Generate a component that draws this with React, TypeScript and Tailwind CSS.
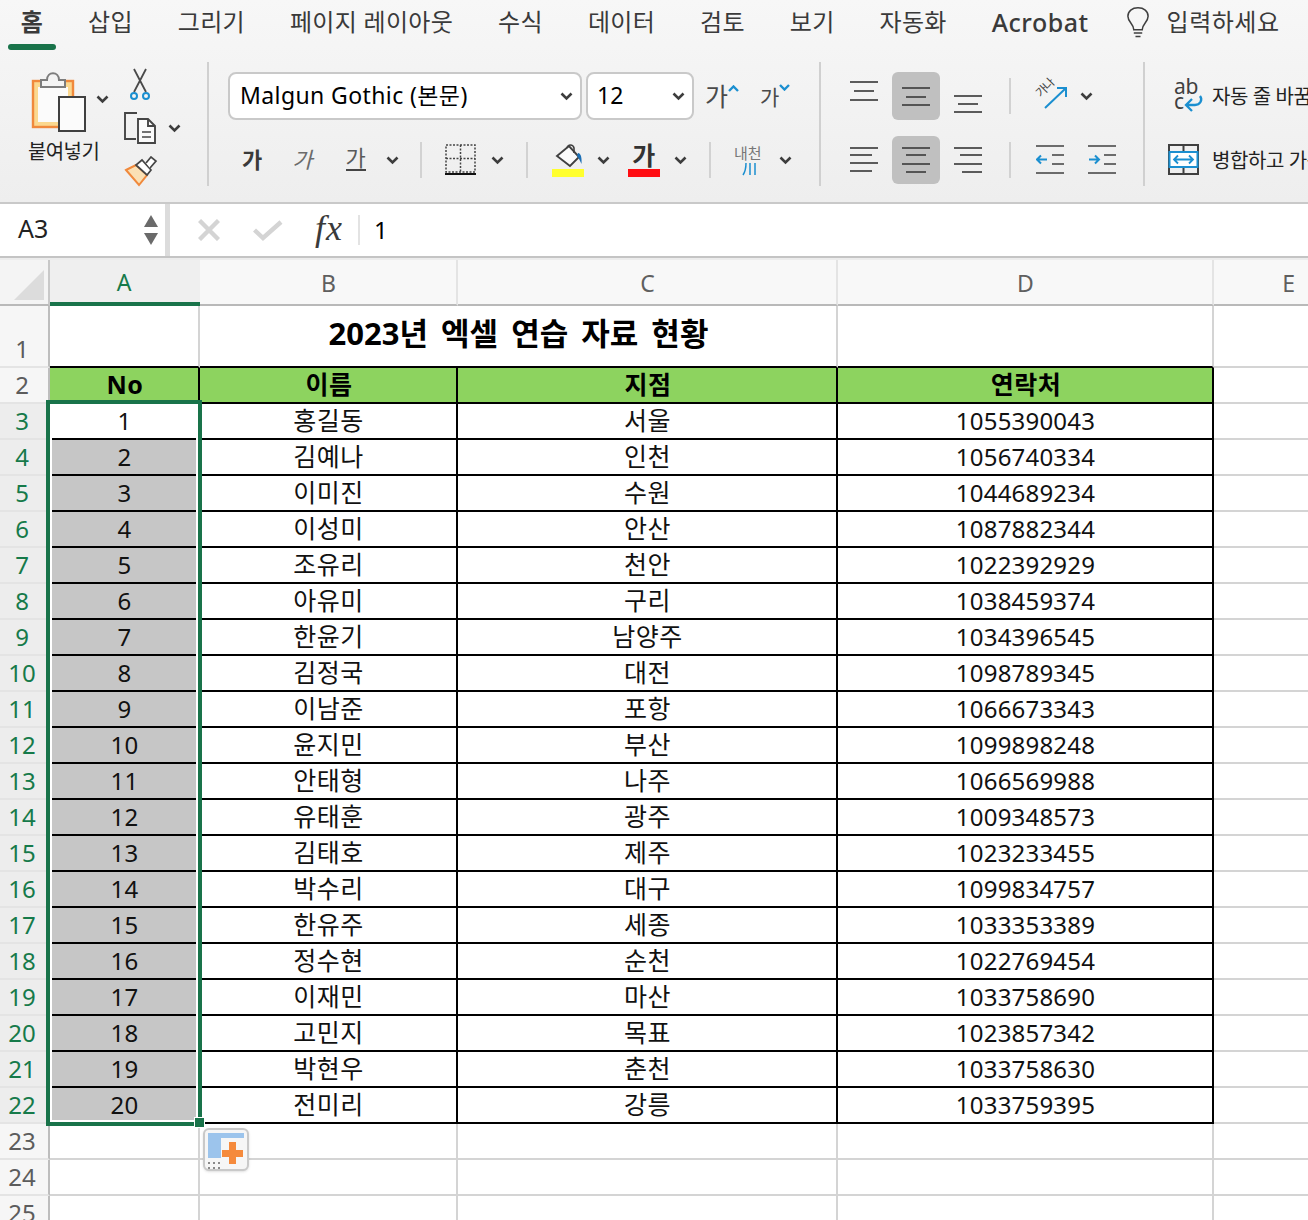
import type { ReactNode } from 'react';

const sans = 'font-["Noto_Sans","Noto_Sans_CJK_KR",sans-serif]';

const rows = [
    ['홍길동', '서울', '1055390043'],
    ['김예나', '인천', '1056740334'],
    ['이미진', '수원', '1044689234'],
    ['이성미', '안산', '1087882344'],
    ['조유리', '천안', '1022392929'],
    ['아유미', '구리', '1038459374'],
    ['한윤기', '남양주', '1034396545'],
    ['김정국', '대전', '1098789345'],
    ['이남준', '포항', '1066673343'],
    ['윤지민', '부산', '1099898248'],
    ['안태형', '나주', '1066569988'],
    ['유태훈', '광주', '1009348573'],
    ['김태호', '제주', '1023233455'],
    ['박수리', '대구', '1099834757'],
    ['한유주', '세종', '1033353389'],
    ['정수현', '순천', '1022769454'],
    ['이재민', '마산', '1033758690'],
    ['고민지', '목표', '1023857342'],
    ['박현우', '춘천', '1033758630'],
    ['전미리', '강릉', '1033759395'],
];

const tabs = ['삽입', '그리기', '페이지 레이아웃', '수식', '데이터', '검토', '보기', '자동화'];

function Chevron({ className = '' }: { className?: string }) {
    return (
        <svg width="13" height="9" viewBox="0 0 13 9" className={`shrink-0 ${className}`} fill="none" stroke="#3d3d3d" strokeWidth="2.6">
            <path d="M1.5 1.5 L6.5 6.5 L11.5 1.5" />
        </svg>
    );
}

function Sep() {
    return <div className="w-[2px] h-[36px] bg-[#d2d2d2] shrink-0" />;
}

function BigSep() {
    return <div className="w-[2px] h-[124px] mt-[12px] bg-[#d0d0d0] shrink-0" />;
}

// lines: [x1, x2, y] inside a 28 wide box
function Lines({ lines, h = 34 }: { lines: number[][]; h?: number }) {
    return (
        <svg width="28" height={h} viewBox={`0 0 28 ${h}`} className="shrink-0" stroke="#404040" strokeWidth="1.7">
            {lines.map((l, i) => (
                <line key={i} x1={l[0]} x2={l[1]} y1={l[2]} y2={l[2]} />
            ))}
        </svg>
    );
}

function AlignBtn({ active, children }: { active?: boolean; children: ReactNode }) {
    return (
        <div className={`w-[48px] h-[48px] rounded-md flex items-center justify-center shrink-0 ${active ? 'bg-[#c0c0c0]' : ''}`}>
            {children}
        </div>
    );
}

function PasteIcon() {
    return (
        <svg width="58" height="64" viewBox="30 70 58 64" className="shrink-0">
            <rect x="33" y="81" width="40" height="46" fill="#fbd88f" stroke="#f0893c" strokeWidth="2.4" />
            <rect x="38" y="87" width="30" height="35" fill="#fbfbfb" />
            <path d="M41 87 V80 H47 C47 71 59 71 59 80 H65 V87 Z" fill="#f4f4f4" stroke="#7d7d7d" strokeWidth="2" />
            <rect x="59" y="97" width="26" height="34" fill="#fbfbfb" stroke="#404040" strokeWidth="2" />
        </svg>
    );
}

function ScissorsIcon() {
    return (
        <svg width="24" height="34" viewBox="128 67 24 34" fill="none">
            <path d="M134 69 L146 92 M146 69 L134 92" stroke="#4a4a4a" strokeWidth="1.8" />
            <circle cx="134" cy="96" r="3" stroke="#1b8fd0" strokeWidth="2" />
            <circle cx="146" cy="96" r="3" stroke="#1b8fd0" strokeWidth="2" />
        </svg>
    );
}

function CopyIcon() {
    return (
        <svg width="34" height="34" viewBox="124 111 34 34" fill="none" stroke="#454545" strokeWidth="1.9">
            <path d="M137 113 H125 V139 H136" />
            <path d="M138 119 H148 L155 126 V143 H138 Z" fill="#fafafa" />
            <path d="M148 119 V126 H155" />
            <path d="M142 132 H151 M142 137 H151" strokeWidth="1.6" />
        </svg>
    );
}

function BrushIcon() {
    return (
        <svg width="34" height="32" viewBox="124 156 34 32">
            <path d="M126 170 L136 165 L147 175 L139 185 Z" fill="#fbe0b4" stroke="#f0893c" strokeWidth="2" />
            <path d="M136 165 L147 175 L151 170 L142 160 Z" fill="#fff" stroke="#454545" strokeWidth="1.7" />
            <path d="M146 163 L151 157 L156 161 L150 168" fill="#fff" stroke="#454545" strokeWidth="1.7" />
        </svg>
    );
}

function BorderIcon() {
    return (
        <svg width="32" height="32" viewBox="0 0 32 32" fill="none" stroke="#444" strokeWidth="1.5" strokeDasharray="2 1.5">
            <rect x="1" y="1" width="29" height="27" />
            <path d="M1 14.5 H30 M15.5 1 V28" />
            <path d="M0 30 H31" strokeDasharray="none" stroke="#111" strokeWidth="2" />
        </svg>
    );
}

function FillIcon() {
    return (
        <div className="flex flex-col items-center w-[32px]">
            <svg width="28" height="24" viewBox="0 0 28 24" fill="none">
                <path d="M3 12 L15 2 L25 13 L16 22 Z" fill="#fafafa" stroke="#404040" strokeWidth="1.9" />
                <path d="M13 4 C14 0 19 0 20 4 V9" stroke="#404040" strokeWidth="1.6" />
                <path d="M24 9 C27 9 28 14 27.5 20 C26 17 25 14 23 12 Z" fill="#1b6fb5" />
            </svg>
            <div className="w-[32px] h-[8px] bg-[#ffff2e] mt-[1px]" />
        </div>
    );
}

function WrapIcon() {
    return (
        <div className="relative w-[30px] h-[34px] shrink-0 leading-none text-[#3f3f3f] text-[21px]">
            <span className="absolute left-0 top-[-3px]">ab</span>
            <span className="absolute left-0 top-[12px]">c</span>
            <svg width="22" height="18" viewBox="0 0 22 18" className="absolute left-[10px] top-[15px]" fill="none" stroke="#1b8fd0" strokeWidth="2.3">
                <path d="M16 2 C19 6 16 11 11 11 H3 M8 5 L2 11 L8 17" />
            </svg>
        </div>
    );
}

function MergeIcon() {
    return (
        <svg width="32" height="32" viewBox="0 0 32 32" fill="none" className="shrink-0">
            <path d="M1 1 H30 V30 H1 Z M1 8 H30 M1 23 H30 M15.5 1 V8 M15.5 23 V30" stroke="#404040" strokeWidth="2" />
            <rect x="1.5" y="8" width="28" height="15" fill="#fff" stroke="#1b8fd0" strokeWidth="2" />
            <path d="M6 15.5 H25 M10 11.5 L6 15.5 L10 19.5 M21 11.5 L25 15.5 L21 19.5" stroke="#1b8fd0" strokeWidth="1.8" />
        </svg>
    );
}

function IndentIcon({ increase }: { increase?: boolean }) {
    return (
        <svg width="28" height="34" viewBox="0 0 28 34" fill="none" className="shrink-0">
            <path d="M0 3 H28 M0 30 H28 M16 12 H28 M16 21 H28" stroke="#404040" strokeWidth="1.7" />
            {increase ? (
                <path d="M1 16.5 H11 M7 12.5 L11 16.5 L7 20.5" stroke="#1b8fd0" strokeWidth="2" />
            ) : (
                <path d="M11 16.5 H1 M5 12.5 L1 16.5 L5 20.5" stroke="#1b8fd0" strokeWidth="2" />
            )}
        </svg>
    );
}

function Ribbon() {
    return (
        <div className="flex h-[152px] text-[#222]">
            {/* Clipboard */}
            <div className="w-[207px] flex shrink-0">
                <div className="ml-[28px] w-[96px] shrink-0 pt-[20px]">
                    <div className="flex items-center ml-[2px] h-[64px]">
                        <PasteIcon />
                        <Chevron className="ml-[8px] mb-[6px]" />
                    </div>
                    <div className="text-[20px] leading-[24px] mt-[6px] tracking-[-0.6px] text-[#222] whitespace-nowrap">붙여넣기</div>
                </div>
                <div className="flex flex-col pt-[17px] shrink-0">
                    <div className="ml-[4px] h-[34px]"><ScissorsIcon /></div>
                    <div className="flex items-center mt-[10px] h-[34px]">
                        <CopyIcon />
                        <Chevron className="ml-[10px]" />
                    </div>
                    <div className="mt-[11px]"><BrushIcon /></div>
                </div>
            </div>
            <BigSep />

            {/* Font */}
            <div className="w-[610px] shrink-0 pl-[19px] pt-[22px] flex flex-col gap-[16px]">
                <div className="flex items-center h-[48px]">
                    <div className="w-[354px] h-[48px] bg-white border-2 border-[#c9c9c9] rounded-lg flex items-center justify-between pl-[10px] pr-[7px] text-[23px] tracking-[0.4px] text-black">
                        <span className="pb-[2px]">Malgun Gothic (본문)</span>
                        <Chevron />
                    </div>
                    <div className="w-[108px] h-[48px] ml-[4px] bg-white border-2 border-[#c9c9c9] rounded-lg flex items-center justify-between pl-[9px] pr-[7px] text-[23px] text-black">
                        <span className="pb-[2px]">12</span>
                        <Chevron />
                    </div>
                    <div className="flex ml-[11px] items-start w-[55px] text-[#4a4a4a] text-[25px] leading-none">
                        <span>가</span>
                        <svg width="11" height="7" viewBox="0 0 11 7" fill="none" stroke="#1b8fd0" strokeWidth="2.4" className="mt-[1px]">
                            <path d="M1 6 L5.5 1.5 L10 6" />
                        </svg>
                    </div>
                    <div className="flex items-start text-[#4a4a4a] text-[21px] leading-none pt-[2px]">
                        <span>가</span>
                        <svg width="11" height="7" viewBox="0 0 11 7" fill="none" stroke="#1b8fd0" strokeWidth="2.4" className="-mt-[3px]">
                            <path d="M1 1 L5.5 5.5 L10 1" />
                        </svg>
                    </div>
                </div>
                <div className="flex items-center h-[48px]">
                    <span className="ml-[14px] text-[22px] font-bold text-[#3a3a3a] leading-none pb-[3px]">가</span>
                    <span className="ml-[30px] text-[22px] italic text-[#6b6b6b] leading-none pb-[3px]">가</span>
                    <span className="ml-[33px] text-[22px] text-[#5a5a5a] leading-none border-b-2 border-[#444] pb-[1px] mb-[3px]">가</span>
                    <Chevron className="ml-[20px]" />
                    <div className="ml-[21px]"><Sep /></div>
                    <div className="ml-[23px]"><BorderIcon /></div>
                    <Chevron className="ml-[14px]" />
                    <div className="ml-[22px]"><Sep /></div>
                    <div className="ml-[24px]"><FillIcon /></div>
                    <Chevron className="ml-[13px]" />
                    <div className="ml-[18px] flex flex-col items-center w-[32px]">
                        <span className="text-[25px] font-semibold leading-[25px] text-[#333]">가</span>
                        <div className="w-[32px] h-[8px] bg-[#ff0d12] mt-[1px]" />
                    </div>
                    <Chevron className="ml-[14px]" />
                    <div className="ml-[22px]"><Sep /></div>
                    <div className="ml-[21px] w-[32px] flex flex-col items-center">
                        <span className="text-[15px] text-[#777] leading-[17px] whitespace-nowrap">내천</span>
                        <svg width="14" height="14" viewBox="0 0 14 14" fill="none" stroke="#1b8fd0" strokeWidth="1.5" className="ml-[2px]">
                            <path d="M4 1 C4 6 3 10 1 13 M8 1 V13 M13 1 V13" />
                        </svg>
                    </div>
                    <Chevron className="ml-[15px]" />
                </div>
            </div>
            <BigSep />

            {/* Alignment */}
            <div className="w-[322px] shrink-0 pl-[19px] pt-[22px] flex flex-col gap-[16px]">
                <div className="flex items-center h-[48px] gap-[4px]">
                    <AlignBtn><Lines lines={[[0, 28, 3], [4, 24, 12], [0, 28, 21]]} /></AlignBtn>
                    <AlignBtn active><Lines lines={[[0, 28, 9], [4, 24, 18], [0, 28, 26]]} /></AlignBtn>
                    <AlignBtn><Lines lines={[[0, 28, 17], [4, 24, 25], [0, 28, 33]]} /></AlignBtn>
                    <div className="ml-[13px]"><Sep /></div>
                    <div className="relative ml-[19px] w-[34px] h-[34px] shrink-0">
                        <span className="absolute left-[1px] top-[3px] text-[12px] leading-none text-[#444] rotate-[-45deg] tracking-[-1px]">가나</span>
                        <svg width="34" height="34" viewBox="0 0 34 34" fill="none" stroke="#1b8fd0" strokeWidth="2" className="absolute inset-0">
                            <path d="M11 29 L32 9 M23 9 H32 V18" />
                        </svg>
                    </div>
                    <Chevron className="ml-[8px]" />
                </div>
                <div className="flex items-center h-[48px] gap-[4px]">
                    <AlignBtn><Lines lines={[[0, 28, 3], [0, 22, 10], [0, 28, 18], [0, 22, 26]]} h={30} /></AlignBtn>
                    <AlignBtn active><Lines lines={[[0, 28, 3], [4, 24, 10], [0, 28, 19], [4, 24, 27]]} h={30} /></AlignBtn>
                    <AlignBtn><Lines lines={[[0, 28, 3], [6, 28, 10], [0, 28, 19], [8, 28, 27]]} h={30} /></AlignBtn>
                    <div className="ml-[13px]"><Sep /></div>
                    <div className="ml-[21px]"><IndentIcon /></div>
                    <div className="ml-[20px]"><IndentIcon increase /></div>
                </div>
            </div>
            <BigSep />

            {/* Wrap and merge */}
            <div className="pl-[23px] pt-[22px] flex flex-col gap-[16px] whitespace-nowrap text-[20px] tracking-[-0.4px] text-[#222]">
                <div className="flex items-center h-[48px] ml-[6px]">
                    <WrapIcon />
                    <span className="ml-[8px] pt-[2px]">자동 줄 바꿈</span>
                </div>
                <div className="flex items-center h-[48px]">
                    <MergeIcon />
                    <span className="ml-[12px] pt-[2px]">병합하고 가운데 맞춤</span>
                </div>
            </div>
        </div>
    );
}

function FormulaBar() {
    return (
        <div className="h-[58px] flex flex-col shrink-0">
            <div className="h-[2px] bg-[#c9c9c9]" />
            <div className="h-[52px] flex bg-white">
                <div className="w-[165px] flex items-center justify-between pl-[18px] pr-[7px] text-[25px] text-[#222] shrink-0">
                    <span className="pb-[2px]">A3</span>
                    <div className="flex flex-col gap-[6px]">
                        <svg width="14" height="12" viewBox="0 0 14 12"><path d="M7 0 L14 12 H0 Z" fill="#6a6a6a" /></svg>
                        <svg width="14" height="12" viewBox="0 0 14 12"><path d="M0 0 H14 L7 12 Z" fill="#6a6a6a" /></svg>
                    </div>
                </div>
                <div className="w-[5px] bg-[#dcdcdc] shrink-0" />
                <div className="flex items-center pl-[28px]">
                    <svg width="22" height="22" viewBox="0 0 22 22" stroke="#d4d4d4" strokeWidth="4.4">
                        <path d="M1.5 1.5 L20.5 20.5 M20.5 1.5 L1.5 20.5" />
                    </svg>
                    <svg width="30" height="22" viewBox="0 0 30 22" fill="none" stroke="#d4d4d4" strokeWidth="4.4" className="ml-[33px]">
                        <path d="M1.5 11 L10 19 L28 3" />
                    </svg>
                    <span className='ml-[32px] w-[29px] font-["Liberation_Serif",serif] italic text-[36px] leading-none text-[#3a3a3a] tracking-[1px] pb-[4px]'>fx</span>
                    <div className="ml-[14px] w-[2px] h-[30px] bg-[#e3e3e3]" />
                    <span className="ml-[14px] text-[24px] text-black">1</span>
                </div>
            </div>
            <div className="h-[2px] bg-[#c4c4c4]" />
            <div className="h-[2px] bg-[#ececec]" />
        </div>
    );
}

function RowHead({ n, h, active, end }: { n: number; h: string; active?: boolean; end?: boolean }) {
    return (
        <div className={`${h} flex justify-center pr-[4px] text-[24px] leading-[34px] border-r-2 border-r-[#bdbdbd] border-b-2 border-b-[#e4e4e4] ${end ? 'items-end' : 'items-center'} ${active ? 'bg-[#ededed] text-[#167a4a]' : 'bg-[#f6f6f6] text-[#5c5c5c]'}`}>
            {n}
        </div>
    );
}

function Sheet() {
    const cell = 'h-[36px] flex items-center justify-center pb-[1px] pl-[1px] text-[#111] border-r-2 border-b-2 border-black';
    const ko = 'text-[25px] tracking-[0.5px]';
    const num = 'text-[24px] tracking-[0.2px]';
    const head = 'h-[36px] flex items-center justify-center pl-[2px] text-[25px] tracking-[0.5px] font-bold text-black bg-[#8dd35f] border-r-2 border-b-2 border-black';
    const empty = 'h-[36px] border-r-2 border-b-2 border-[#d4d4d4]';

    return (
        <div className="relative grid grid-cols-[50px_150px_258px_380px_376px_94px]">
            {/* column headers */}
            <div className="h-[46px] bg-[#f4f4f4] border-r-2 border-r-[#c8c8c8] border-b-2 border-b-[#b9b9b9] flex items-end justify-end pr-[4px] pb-[4px]">
                <svg width="30" height="30" viewBox="0 0 30 30"><path d="M30 0 V30 H0 Z" fill="#dcdcdc" /></svg>
            </div>
            <div className="h-[46px] bg-[#efefef] border-b-[4px] border-[#19734a] flex items-center justify-center pr-[2px] pt-[2px] text-[23px] text-[#167a4a]">A</div>
            {['B', 'C', 'D'].map((c) => (
                <div key={c} className="h-[46px] bg-[#f8f8f8] border-r-2 border-r-[#e4e4e4] border-b-2 border-b-[#b9b9b9] flex items-center justify-center pt-[2px] pl-[1px] text-[23px] text-[#5f5f5f]">{c}</div>
            ))}
            <div className="h-[46px] bg-[#f8f8f8] border-b-2 border-b-[#b9b9b9] flex items-center justify-end pt-[2px] pr-[13px] text-[23px] text-[#5f5f5f]">E</div>

            {/* row 1 */}
            <RowHead n={1} h="h-[62px]" end />
            <div className="h-[62px] border-r-2 border-r-[#d4d4d4] border-b-2 border-b-black" />
            <div className="col-span-2 h-[62px] flex items-center justify-center text-[31px] [word-spacing:5px] font-bold text-black border-r-2 border-r-[#d4d4d4] border-b-2 border-b-black pb-[6px] pl-[1px]">2023년 엑셀 연습 자료 현황</div>
            <div className="h-[62px] border-r-2 border-r-[#d4d4d4] border-b-2 border-b-black" />
            <div className="h-[62px] border-b-2 border-[#d4d4d4]" />

            {/* row 2 */}
            <RowHead n={2} h="h-[36px]" />
            <div className={head}>No</div>
            <div className={head}>이름</div>
            <div className={head}>지점</div>
            <div className={head}>연락처</div>
            <div className="h-[36px] border-b-2 border-[#d4d4d4]" />

            {/* data rows */}
            {rows.map((r, i) => (
                <div key={i} className="contents">
                    <RowHead n={i + 3} h="h-[36px]" active />
                    <div className={`${cell} ${num} ${i > 0 ? 'bg-[#c6c6c6]' : ''}`}>{i + 1}</div>
                    <div className={`${cell} ${ko}`}>{r[0]}</div>
                    <div className={`${cell} ${ko}`}>{r[1]}</div>
                    <div className={`${cell} ${num}`}>{r[2]}</div>
                    <div className="h-[36px] border-b-2 border-[#d4d4d4]" />
                </div>
            ))}

            {/* empty rows */}
            {[23, 24, 25].map((n) => (
                <div key={n} className="contents">
                    <RowHead n={n} h="h-[36px]" />
                    <div className={empty} />
                    <div className={empty} />
                    <div className={empty} />
                    <div className={empty} />
                    <div className="h-[36px] border-b-2 border-[#d4d4d4]" />
                </div>
            ))}

            {/* selection of A3:A22 */}
            <div className="absolute left-[46px] top-[140px] w-[156px] h-[726px] border-[4px] border-[#19734a]">
                <div className="absolute inset-0 border-2 border-white" />
            </div>
            <div className="absolute left-[194px] top-[857px] w-[11px] h-[11px] bg-[#19734a] border border-white" />

            {/* paste options */}
            <div className="absolute left-[203px] top-[868px] w-[46px] h-[43px] rounded-md border-2 border-[#c9c9c9] bg-[#f6f6f6] shadow-sm">
                <svg width="42" height="39" viewBox="0 0 42 39">
                    <path d="M3 3 H39 V8 H16 V28 H3 Z" fill="#9cc4ec" />
                    <path d="M24 12 H31 V20 H38 V27 H31 V34 H24 V27 H17 V20 H24 Z" fill="#f58a3c" />
                    <path d="M3 32 h2 v2 h-2 Z M8 32 h2 v2 h-2 Z M13 32 h2 v2 h-2 Z M8 37 h2 v2 h-2 Z M3 37 h2 v2 h-2 Z M13 37 h2 v2 h-2 Z" fill="#8a8a8a" />
                </svg>
            </div>
        </div>
    );
}

export default function App() {
    return (
        <div className={`w-[1308px] h-[1220px] overflow-hidden bg-white flex flex-col ${sans}`}>
            <div className="bg-gradient-to-b from-[#f7f7f7] to-[#eeeeee] shrink-0">
                {/* Tabs */}
                <div className="h-[50px] flex items-start pl-[8px] text-[24px] leading-[44px] tracking-[0.3px] text-[#3a3a3a]">
                    <div className="w-[48px] h-[50px] flex flex-col items-center font-semibold">
                        <span>홈</span>
                        <div className="mt-auto w-[48px] h-[6px] rounded-full bg-[#19734a]" />
                    </div>
                    <div className="flex gap-[45px] ml-[32px] whitespace-nowrap">
                        {tabs.map((t) => (
                            <span key={t}>{t}</span>
                        ))}
                        <span className="text-[25px] font-medium tracking-[0.5px]">Acrobat</span>
                    </div>
                    <svg width="24" height="32" viewBox="0 0 28 38" fill="none" stroke="#3f3f3f" strokeWidth="1.8" className="ml-[37px] mt-[7px] shrink-0">
                        <path d="M9 27 C9 20 2 18 2 11 C2 5 7 1 14 1 C21 1 26 5 26 11 C26 18 19 20 19 27 Z" />
                        <path d="M9 31 H19 M11 35 H17" />
                    </svg>
                    <span className="ml-[17px] whitespace-nowrap tracking-[0.5px]">입력하세요</span>
                </div>
                <Ribbon />
            </div>
            <FormulaBar />
            <Sheet />
        </div>
    );
}
